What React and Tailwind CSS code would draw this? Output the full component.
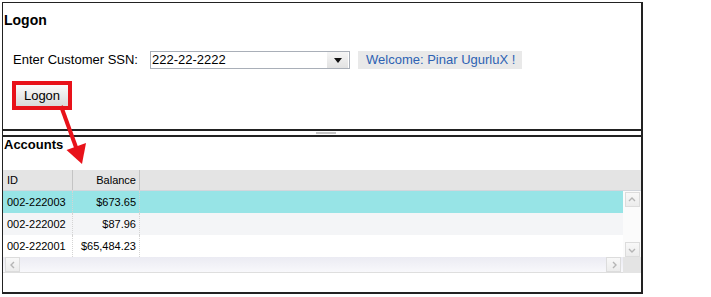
import React from "react";

const rows = [
  { id: "002-222003", balance: "$673.65", bg: "bg-[#97e4e6]" },
  { id: "002-222002", balance: "$87.96", bg: "bg-[#f4f5f7]" },
  { id: "002-222001", balance: "$65,484.23", bg: "bg-white" },
];

function ScrollBtn({ children }) {
  return (
    <div className="w-[15px] h-[15px] border border-[#dcdcdc] bg-gradient-to-b from-[#f8f8f8] to-[#ececec] flex items-center justify-center text-[#b8b8b8]">
      {children}
    </div>
  );
}

function Chevron({ dir }) {
  const d = {
    up: "M2 6 L5 3 L8 6",
    down: "M2 4 L5 7 L8 4",
    left: "M6 2 L3 5 L6 8",
    right: "M4 2 L7 5 L4 8",
  }[dir];
  return (
    <svg width="10" height="10" viewBox="0 0 10 10">
      <path d={d} fill="none" stroke="#b5b5b5" strokeWidth="1.4" />
    </svg>
  );
}

export default function App() {
  return (
    <div className="relative w-[711px] h-[297px] bg-white pt-[2px] pl-[2px] font-['Liberation_Sans',Arial,sans-serif] text-black">
      <div className="w-[641px] h-[292px] border-l border-t border-r-2 border-b-2 border-[#222] flex flex-col">
        {/* Logon panel */}
        <div className="h-[128px] border-b-2 border-[#222] flex flex-col">
          <div className="pl-[1px] pt-[9px] text-[14px] leading-[16px] font-bold">Logon</div>
          <div className="flex items-center mt-[23px] ml-[10px] text-[13px]">
            <span className="leading-[18px]">Enter Customer SSN:</span>
            <div className="ml-[12px] w-[200px] h-[18px] border border-[#a9afb8] bg-white flex items-center">
              <span className="flex-1 pl-[1px] leading-[16px]">222-22-2222</span>
              <div className="w-[21px] h-[16px] mr-[1px] bg-gradient-to-b from-[#f5f5f5] to-[#e2e2e2] flex items-center justify-center">
                <svg width="8" height="5" viewBox="0 0 8 5">
                  <path d="M0 0 L8 0 L4 5 Z" fill="#111" />
                </svg>
              </div>
            </div>
            <div className="ml-[8px] h-[18px] w-[164px] bg-[#e9e9e9] pl-[8px] leading-[18px] text-[#2d62b3]">
              Welcome: Pinar UgurluX !
            </div>
          </div>
          <div className="mt-[12px] ml-[9px] w-[60px] h-[29px] border-4 border-[#e8121a]">
            <div className="w-full h-full bg-gradient-to-b from-[#fbfbfb] to-[#d9d9d9] text-[13px] leading-[21px] text-center">
              Logon
            </div>
          </div>
        </div>

        {/* splitter */}
        <div className="h-[4px] flex items-center justify-center">
          <div className="w-[20px] h-[2px] bg-[#c4c4c4] ml-[8px]" />
        </div>

        {/* Accounts panel */}
        <div className="flex-1 border-t-2 border-[#222] flex flex-col">
          <div className="pl-[1px] text-[13px] leading-[15px] font-bold">Accounts</div>
          <div className="mt-[18px] text-[11px]">
            <div className="h-[21px] flex bg-[#e4e4e4] border-b border-[#d2d6dc]">
              <div className="w-[70px] border-r border-[#c4c4c4] pl-[4px] leading-[20px]">ID</div>
              <div className="w-[67px] border-r border-[#c4c4c4] pr-[3px] text-right leading-[20px]">Balance</div>
              <div className="flex-1" />
            </div>
            <div className="flex">
              <div className="w-[620px]">
                {rows.map((r) => (
                  <div key={r.id} className={`h-[22px] flex ${r.bg}`}>
                    <div className="w-[70px] border-r border-dotted border-[#d4d4d4] pl-[4px] leading-[22px]">{r.id}</div>
                    <div className="w-[67px] border-r border-dotted border-[#d4d4d4] pr-[3px] text-right leading-[22px]">{r.balance}</div>
                    <div className="flex-1" />
                  </div>
                ))}
              </div>
              <div className="flex-1 h-[66px] bg-[#fbfbfb] flex flex-col justify-between items-center pt-[1px]">
                <ScrollBtn><Chevron dir="up" /></ScrollBtn>
                <ScrollBtn><Chevron dir="down" /></ScrollBtn>
              </div>
            </div>
            <div className="flex h-[16px]">
              <div className="w-[620px] bg-gradient-to-b from-[#ebebf3] to-[#f8f8fb] border-b border-[#dedede] flex items-center justify-between px-[2px]">
                <ScrollBtn><Chevron dir="left" /></ScrollBtn>
                <ScrollBtn><Chevron dir="right" /></ScrollBtn>
              </div>
              <div className="flex-1 bg-[#e4e4e4]" />
            </div>
          </div>
        </div>
      </div>

      {/* annotation arrow */}
      <svg className="absolute left-0 top-0 pointer-events-none" width="120" height="180" viewBox="0 0 120 180">
        <line x1="61" y1="106" x2="77" y2="150" stroke="#e8121a" strokeWidth="4" />
        <path d="M82 164 L66.5 150 L86 143 Z" fill="#e8121a" />
      </svg>
    </div>
  );
}
